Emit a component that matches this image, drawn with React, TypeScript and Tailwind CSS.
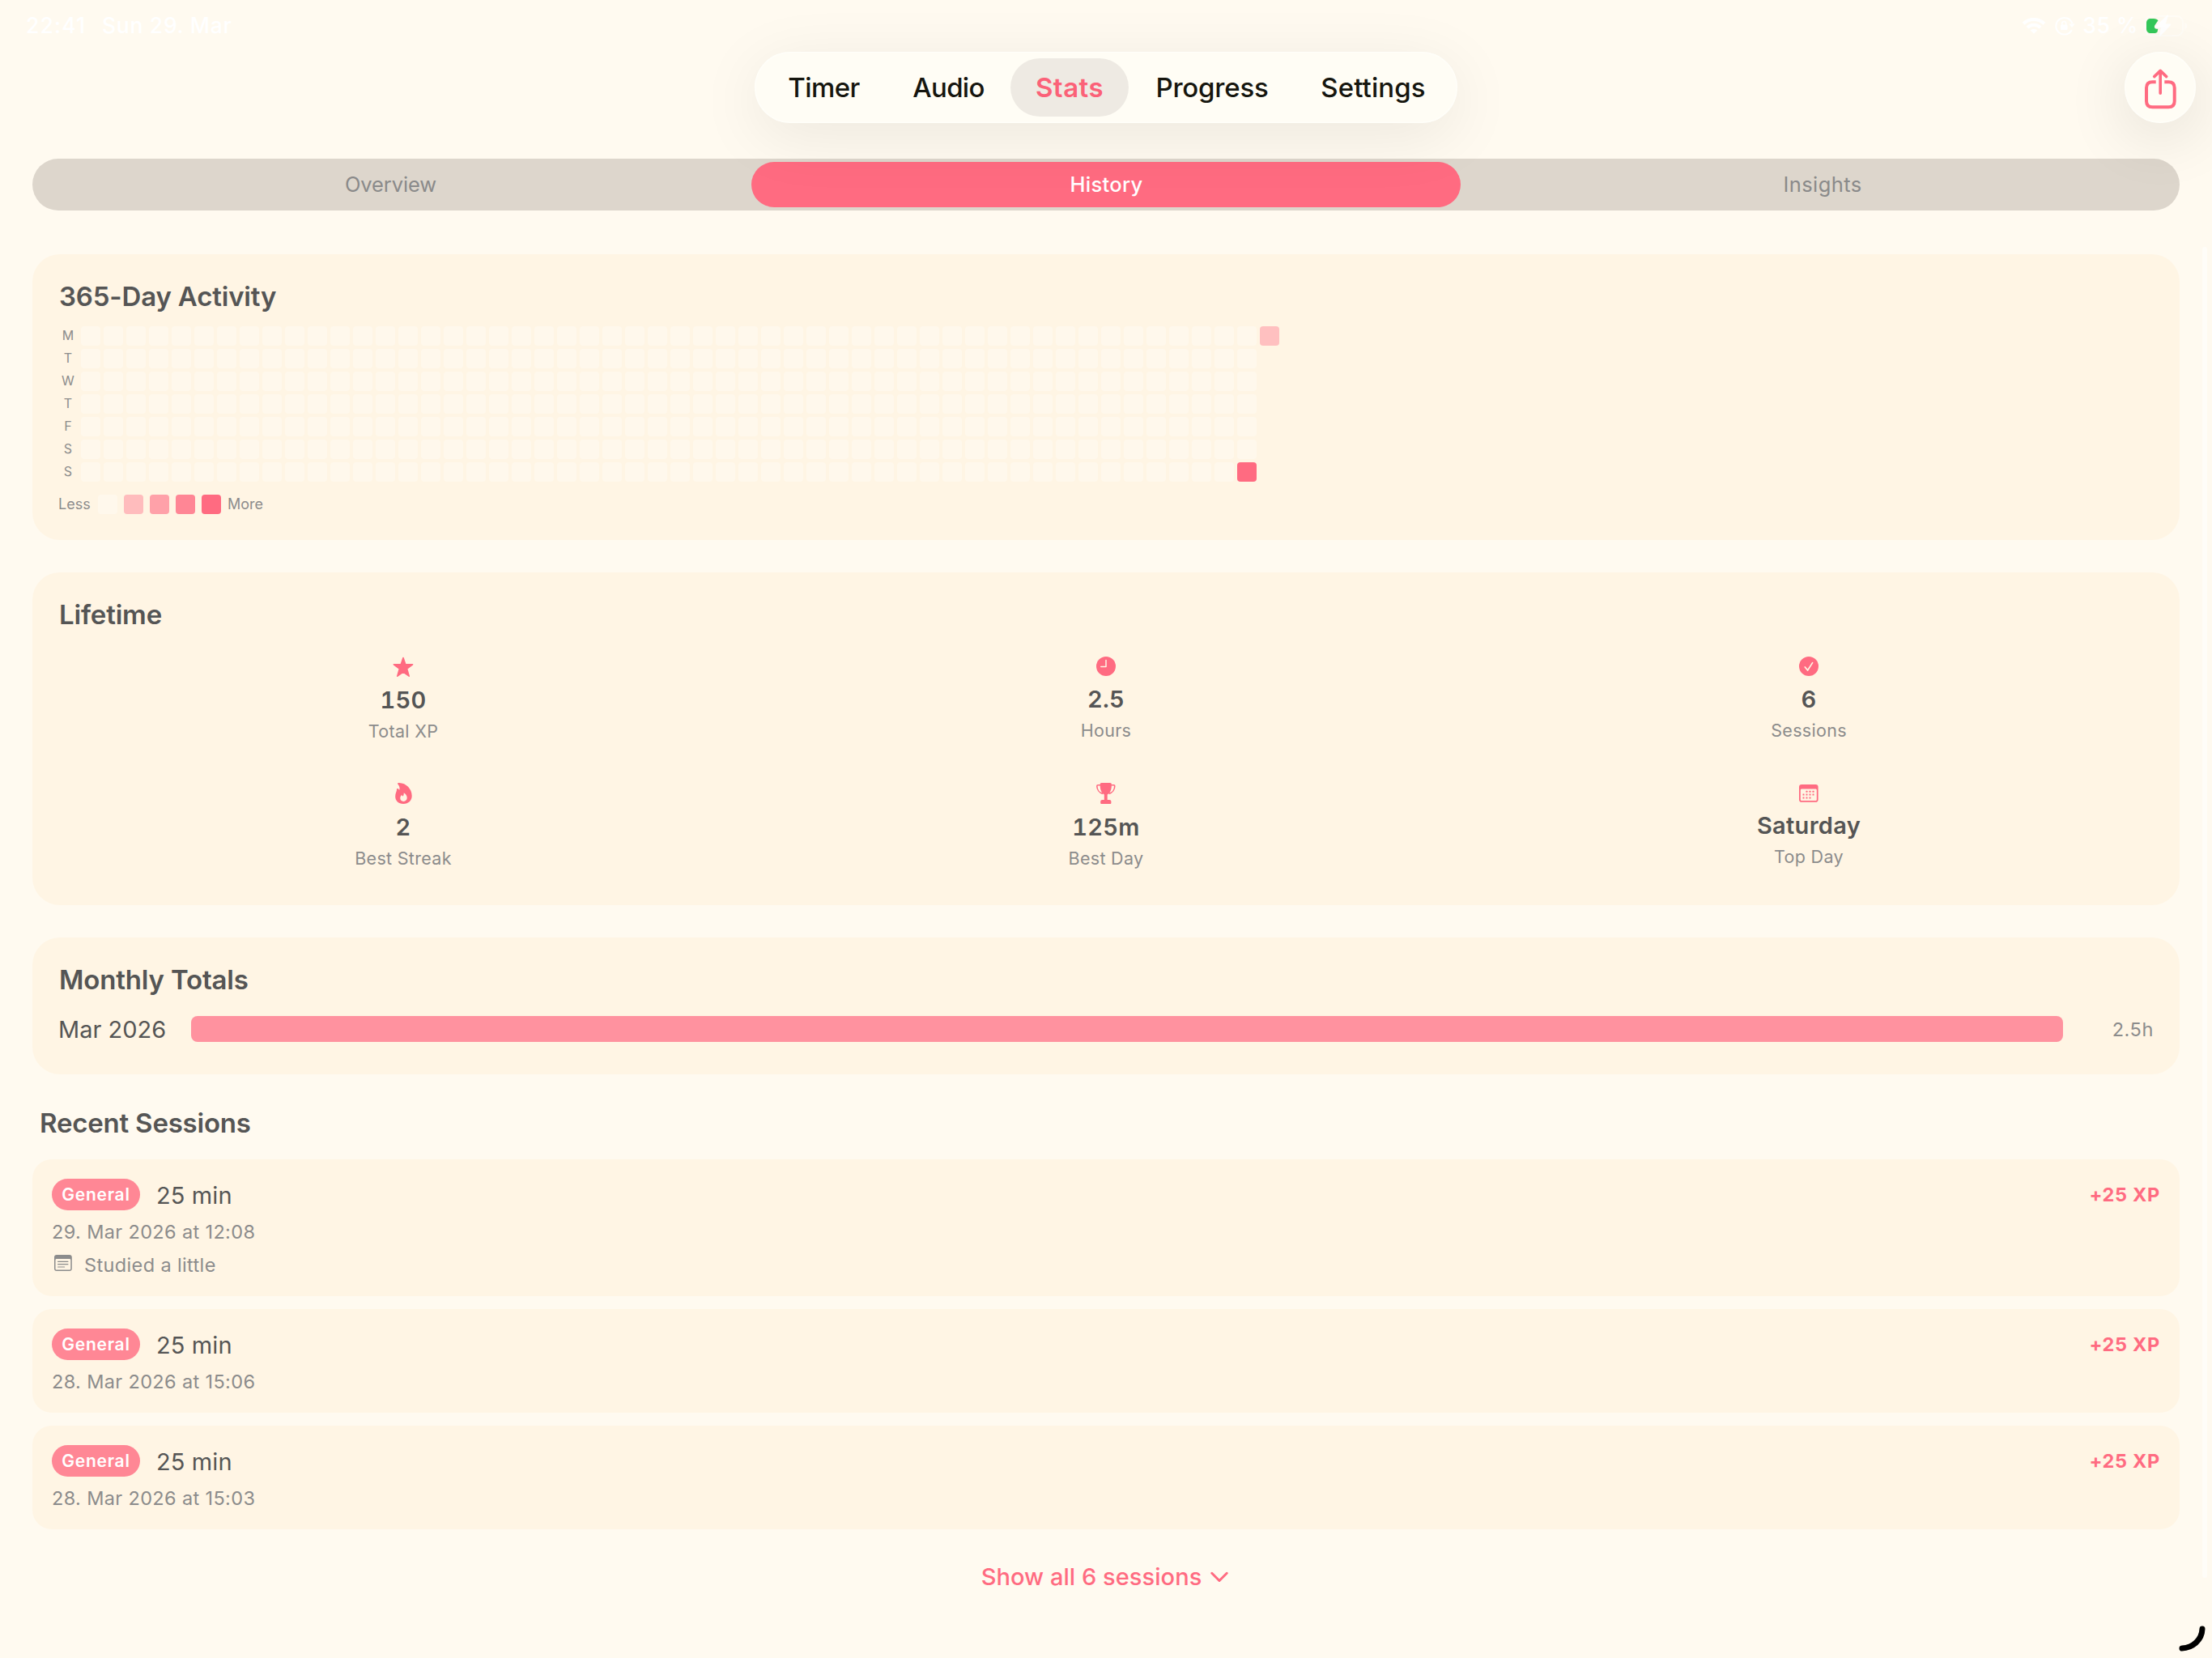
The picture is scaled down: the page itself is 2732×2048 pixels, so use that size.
import type { ReactNode } from 'react';

const tabs = [
  { label: 'Timer', className: 'w-[155px] font-medium tracking-[-0.6px] text-[#16160f]' },
  { label: 'Audio', className: 'w-[153px] font-medium tracking-[-0.7px] text-[#16160f]' },
  { label: 'Stats', className: 'w-[146px] rounded-full bg-[#eeeae3] font-semibold tracking-[0.5px] text-[#fb6178]' },
  { label: 'Progress', className: 'w-[206px] font-medium tracking-[-0.2px] text-[#16160f]' },
  { label: 'Settings', className: 'w-[192px] font-medium tracking-[0.1px] text-[#16160f]' },
];

const weekdays = ['M', 'T', 'W', 'T', 'F', 'S', 'S'];
const WEEKS = 52;

const sessions = [
  { tag: 'General', duration: '25 min', date: '29. Mar 2026 at 12:08', note: 'Studied a little', xp: '+25 XP' },
  { tag: 'General', duration: '25 min', date: '28. Mar 2026 at 15:06', xp: '+25 XP' },
  { tag: 'General', duration: '25 min', date: '28. Mar 2026 at 15:03', xp: '+25 XP' },
];

function StarIcon() {
  return (
    <svg width="26" height="26" viewBox="0 0 26 26" className="fill-[#ff6b81] stroke-[#ff6b81]">
      <path
        strokeWidth="1.6"
        strokeLinejoin="round"
        d="M13 1.6 15.8 9.7 24.6 9.8 17.6 15 20.2 24.2 13 19 5.8 24.2 8.4 15 1.4 9.8 10.2 9.7Z"
      />
    </svg>
  );
}

function ClockIcon() {
  return (
    <svg width="24" height="24" viewBox="0 0 24 24" fill="none">
      <circle cx="12" cy="12" r="12" className="fill-[#ff6b81]" />
      <path d="M12 4.5V12.4H5.8" className="stroke-[#fff5e4]" strokeWidth="1.5" strokeLinecap="round" strokeLinejoin="round" />
    </svg>
  );
}

function CheckIcon() {
  return (
    <svg width="24" height="24" viewBox="0 0 24 24" fill="none">
      <circle cx="12" cy="12" r="12" className="fill-[#ff6b81]" />
      <path d="M7.3 13 10.6 17 16.6 7.6" className="stroke-[#fff5e4]" strokeWidth="1.7" strokeLinecap="round" strokeLinejoin="round" />
    </svg>
  );
}

function FlameIcon() {
  return (
    <svg width="21" height="26" viewBox="0 0 21 26" className="fill-[#ff6b81]">
      <path
        fillRule="evenodd"
        d="M3.2.5C3.6.2 4.2.1 5 .1 13.5.3 20.7 7.5 20.7 16 20.7 22 16.5 25.9 10.2 25.9 4.2 25.9.2 22.2.2 16.7.2 13 2.2 10.8 2.1 7.6 2.1 6.9 2.7 6.7 3.3 7.1 4.1 7.5 4.8 8.2 5.2 9 6.2 6.3 5.2 3.5 3.3 1.4 3 1.1 2.9.8 3.2.5ZM10.7 12.2C10.9 13.9 10.5 15.5 9.7 16.6 8.9 16.3 8.4 15.8 8.2 14.8 7 16 6.3 17.4 6.3 19.1 6.3 21.4 7.9 22.9 10.4 22.9 13 22.9 14.7 21.1 14.7 18.6 14.7 16 13.3 13.7 10.7 12.2Z"
      />
    </svg>
  );
}

function TrophyIcon() {
  return (
    <svg width="24" height="26" viewBox="0 0 24 26" className="fill-[#ff6b81]">
      <path d="M6.5 0H17C18.2 0 18.9.7 18.9 1.9 18.9 8 17.7 11.8 13.7 14.6V21H16.2C17.5 21 18.4 21.9 18.4 23.2V24.8C18.4 25.6 18 26 17.2 26H6.5C5.7 26 5.2 25.6 5.2 24.8V23.2C5.2 21.9 6.2 21 7.4 21H9.8V14.6C5.9 11.8 4.7 8 4.7 1.9 4.7.7 5.3 0 6.5 0Z" />
      <path
        fill="none"
        className="stroke-[#ff6b81]"
        strokeWidth="1.6"
        d="M5 2.7H2C1.2 2.7.8 3.1.8 3.9.9 8.3 3.6 12.3 8 13.4M18.7 2.7H21.6C22.4 2.7 22.8 3.1 22.8 3.9 22.7 8.3 20 12.3 15.6 13.4"
      />
    </svg>
  );
}

function CalendarIcon() {
  const dots = [
    [9.5, 8.7], [13.5, 8.7], [17.5, 8.7],
    [5.5, 12.6], [9.5, 12.6], [13.5, 12.6], [17.5, 12.6],
    [5.5, 16.5], [9.5, 16.5], [13.5, 16.5],
  ];
  return (
    <svg width="24" height="22" viewBox="0 0 24 22" className="fill-[#ff6b81]">
      <path
        fillRule="evenodd"
        d="M3.2 0H20.5C22.5 0 23.6 1.1 23.6 3.1V18.7C23.6 20.7 22.5 21.8 20.5 21.8H3.2C1.1 21.8 0 20.7 0 18.7V3.1C0 1.1 1.1 0 3.2 0ZM1.8 7V18.4C1.8 19.4 2.4 20 3.4 20H20.3C21.3 20 21.8 19.4 21.8 18.4V7C21.8 6 21.3 5.5 20.3 5.5H3.4C2.4 5.5 1.8 6 1.8 7Z"
      />
      {dots.map(([x, y]) => (
        <rect key={`${x}-${y}`} x={x - 1} y={y - 1} width="2" height="2" rx="0.5" />
      ))}
    </svg>
  );
}

function NoteIcon() {
  return (
    <svg width="22" height="20" viewBox="0 0 22 20" className="fill-[#8c8c8c]">
      <path
        fillRule="evenodd"
        d="M3 0H18.8C20.7 0 21.8 1 21.8 2.9V17.1C21.8 19 20.7 20 18.8 20H3C1.1 20 0 19 0 17.1V2.9C0 1 1.1 0 3 0ZM1.5 6.5V16.9C1.5 17.9 2.1 18.5 3.1 18.5H18.7C19.7 18.5 20.3 17.9 20.3 16.9V6.5C20.3 5.5 19.7 5 18.7 5H3.1C2.1 5 1.5 5.5 1.5 6.5Z"
      />
      <path fill="none" className="stroke-[#8c8c8c]" strokeWidth="1.2" strokeLinecap="round" d="M4.6 8.4H16.9M4.6 11.7H16.9M4.6 15H12.6" />
    </svg>
  );
}

function StatusIcons() {
  return (
    <div className="flex items-center text-white">
      <svg width="30" height="22" viewBox="0 0 30 22" fill="none" stroke="currentColor" strokeWidth="4">
        <path d="M2.1 8.2A18.5 18.5 0 0 1 27.9 8.2" />
        <path d="M6.9 13A11.7 11.7 0 0 1 23.1 13" />
        <path d="M15 20.8 10.7 16.5A6.2 6.2 0 0 1 19.3 16.5Z" fill="currentColor" stroke="none" />
      </svg>
      <svg width="26" height="24" viewBox="0 0 26 24" fill="none" stroke="currentColor" strokeWidth="2" className="ml-2.5">
        <path d="M21.8 17A10.3 10.3 0 1 1 22.4 9" />
        <path d="M18.5 9.5H25.5L22 14Z" fill="currentColor" stroke="none" />
        <rect x="8" y="10.5" width="8.5" height="6.5" rx="1.3" fill="currentColor" stroke="none" />
        <path d="M9.8 11V9A2.45 2.45 0 0 1 14.7 9V11" strokeWidth="1.5" />
      </svg>
      <span className="ml-[9px] tracking-[0.6px]">35 %</span>
      <svg width="56" height="28" viewBox="0 0 56 28" className="ml-1.5">
        <rect x="2" y="2" width="47" height="24" rx="7.5" fill="none" stroke="currentColor" strokeOpacity="0.4" strokeWidth="2" />
        <path d="M51.5 10V18C53.3 17.4 54.4 16 54.4 14 54.4 12 53.3 10.6 51.5 10Z" fill="currentColor" fillOpacity="0.45" />
        <path d="M9.500 5H13C15.500 5 17.800 6 18.500 7.300L14.300 13.200C13.300 15.200 14 17.500 16.500 17.800H18.300L17.500 21.500C16.500 22.600 15 23 13 23H9.500C6 23 4 21 4 17.500V10.500C4 7 6 5 9.500 5Z" fill="#34c759" />
        <path d="M29.5.8 15.6 14.4C14.8 15.3 15.2 16.2 16.4 16.2H22L19.6 26C19.4 27 20.2 27.5 21 26.8L33.8 13.3C34.6 12.4 34.3 11.6 33.2 11.6H27.8L30.8 1.8C31.1.8 30.3.1 29.5.8Z" fill="currentColor" />
      </svg>
    </div>
  );
}

function Card({ title, children }: { title: string; children: ReactNode }) {
  return (
    <section className="rounded-[34px] bg-[#fff5e4] p-8">
      <h2 className="mb-4 pl-px text-[33px] leading-[41px] font-semibold tracking-[-0.17px]">{title}</h2>
      {children}
    </section>
  );
}

function Stat({ icon, value, label, iconBox }: { icon: ReactNode; value: string; label: string; iconBox: string }) {
  return (
    <div className="flex flex-col items-center">
      <div className={`flex items-center justify-center ${iconBox}`}>{icon}</div>
      <div className="text-[29px] leading-[29px] font-semibold tracking-[0.3px] tabular-nums">{value}</div>
      <div className="mt-2.5 text-[21.5px] leading-7 tracking-[0.3px] text-[#8c8c8c]">{label}</div>
    </div>
  );
}

function ActivityGrid() {
  return (
    <>
      <div className="flex gap-1">
        <div className="-mt-px flex w-6 flex-col gap-1 text-center text-base leading-6 text-[#8c8c8c]">
          {weekdays.map((day, i) => (
            <span key={i}>{day}</span>
          ))}
        </div>
        {Array.from({ length: WEEKS }, (_, week) => (
          <div key={week} className="flex flex-col gap-1">
            {weekdays.map((_, day) => (
              <div
                key={day}
                className={`size-6 rounded-[4px] ${week === WEEKS - 1 && day === 6 ? 'bg-[#ff6b81]' : 'bg-[#fff8ec]'}`}
              />
            ))}
          </div>
        ))}
        <div className="size-6 rounded-[4px] bg-[#ffc0c0]" />
      </div>
      <div className="mt-4 flex h-6 items-center gap-2 text-[18px] text-[#8c8c8c]">
        <span className="mb-px w-[41px]">Less</span>
        <div className="size-6 rounded-[4px] bg-[#fff8ec]" />
        <div className="size-6 rounded-[4px] bg-[#ffbcbd]" />
        <div className="size-6 rounded-[4px] bg-[#ffa1a9]" />
        <div className="size-6 rounded-[4px] bg-[#ff8695]" />
        <div className="size-6 rounded-[4px] bg-[#ff6b81]" />
        <span className="mb-px">More</span>
      </div>
    </>
  );
}

export default function App() {
  return (
    <div className="relative h-[2048px] w-[2732px] overflow-hidden bg-[#fffaf0] font-[Inter,'Liberation_Sans',sans-serif] text-[#555555]">
      {/* Status bar */}
      <div className="flex h-16 items-center justify-between pr-[29px] pl-8 text-[26.5px] font-medium text-white">
        <div className="flex">
          <span className="w-[94px] tracking-[1.15px]">22:41</span>
          <span className="tracking-[0.7px]">Sun 29. Mar</span>
        </div>
        <StatusIcons />
      </div>

      {/* Tab bar */}
      <header className="relative z-10 flex h-[88px] justify-end pr-5">
        <nav className="flex w-[868px] rounded-full bg-[#fffdf5] p-2 text-[33px] shadow-[0_16px_80px_rgba(0,0,0,0.08),inset_0_0_2px_1px_#fffffb]">
          {tabs.map((tab) => (
            <button key={tab.label} className={`flex h-[72px] items-center justify-center pt-0.5 ${tab.className}`}>
              {tab.label}
            </button>
          ))}
        </nav>
        <button className="ml-[824px] size-[88px] rounded-full bg-[#fffdf5] shadow-[0_16px_80px_rgba(0,0,0,0.12),inset_0_0_2px_1px_#fffffb]">
          <svg width="88" height="88" viewBox="0 0 88 88" fill="none" className="stroke-[#ff6b81]">
            <path d="M38.7 37.3H34.5C29.5 37.3 27 39.8 27 44.6V61C27 65.9 29.5 68.3 34.5 68.3H54.2C59.2 68.3 61.7 65.9 61.7 61V44.6C61.7 39.8 59.2 37.3 54.2 37.3H49.3" strokeWidth="4" />
            <path d="M44.2 51.2V24M36.7 30.6 44.2 23.4 51.7 30.6" strokeWidth="3.6" strokeLinecap="round" strokeLinejoin="round" />
          </svg>
        </button>
      </header>

      <main className="px-10 pt-11">
        {/* Segmented control */}
        <div className="grid h-16 grid-cols-3 rounded-full bg-[#ddd6cc] text-[25.5px] text-[#8a8a8a]">
          <button className="pl-px tracking-[-0.1px]">Overview</button>
          <button className="m-1 rounded-full bg-[#ff6b81] pl-px font-medium tracking-[0.3px] text-white">History</button>
          <button className="pl-0.5 tracking-[0.4px]">Insights</button>
        </div>

        <div className="mt-[54px] flex flex-col gap-10">
          <Card title="365-Day Activity">
            <ActivityGrid />
          </Card>

          <Card title="Lifetime">
            <div className="grid auto-rows-[133px] grid-cols-3 gap-x-4 gap-y-6">
              <Stat icon={<StarIcon />} value="150" label="Total XP" iconBox="h-[54px] pt-px" />
              <Stat icon={<ClockIcon />} value="2.5" label="Hours" iconBox="h-[53px]" />
              <Stat icon={<CheckIcon />} value="6" label="Sessions" iconBox="h-[53px]" />
              <Stat icon={<FlameIcon />} value="2" label="Best Streak" iconBox="h-[54px]" />
              <Stat icon={<TrophyIcon />} value="125m" label="Best Day" iconBox="h-[54px]" />
              <Stat icon={<CalendarIcon />} value="Saturday" label="Top Day" iconBox="h-[52px] pt-0.5" />
            </div>
          </Card>

          <Card title="Monthly Totals">
            <div className="flex h-12 items-center">
              <span className="w-[164px] pt-0.5 text-[29px]">Mar 2026</span>
              <div className="h-8 flex-1 rounded-lg bg-[#ff929f]" />
              <span className="w-28 pt-px text-right text-[23.5px] tracking-[0.6px] text-[#8c8c8c]">2.5h</span>
            </div>
          </Card>
        </div>

        {/* Recent sessions */}
        <h2 className="mt-10 mb-6 pl-[9px] text-[33px] leading-[41px] font-semibold tracking-[-0.2px]">Recent Sessions</h2>
        <div className="flex flex-col gap-4">
          {sessions.map((session) => (
            <div key={session.date} className="rounded-[24px] bg-[#fff5e4] p-6">
              <div className="flex h-[39px] items-center">
                <span className="flex h-[39px] w-[109px] items-center justify-center rounded-full bg-[#ff8795] text-[21px] font-semibold tracking-[0.75px] text-white">
                  {session.tag}
                </span>
                <span className="ml-5 pt-0.5 text-[29px] tracking-[0.1px]">{session.duration}</span>
                <span className="ml-auto text-[23.5px] font-bold tracking-[0.7px] text-[#ff6b81]">{session.xp}</span>
              </div>
              <p className="mt-3 text-[23.5px] leading-[29px] tracking-[0.36px] text-[#8c8c8c]">{session.date}</p>
              {session.note && (
                <div className="mt-3 flex h-[29px] items-center text-[23.5px] leading-[29px] tracking-[0.37px] text-[#8c8c8c]">
                  <div className="mb-1.5 w-10 pl-[3px]">
                    <NoteIcon />
                  </div>
                  {session.note}
                </div>
              )}
            </div>
          ))}
        </div>

        <button className="mx-auto mt-[41px] flex h-9 items-center gap-[11px] pr-[3px] text-[29px] font-medium tracking-[0.06px] text-[#ff6b81]">
          Show all 6 sessions
          <svg width="22" height="14" viewBox="0 0 22 14" fill="none" stroke="currentColor" strokeWidth="3" strokeLinecap="round" strokeLinejoin="round">
            <path d="M1.8 2.3 11 11.5 20.2 2.3" />
          </svg>
        </button>
      </main>

      {/* Scroll indicator */}
      <div className="absolute top-[305px] right-1.5 h-[1644px] w-1.5 rounded-full bg-[#fffdf8]" />

      {/* Corner handle */}
      <svg width="40" height="40" viewBox="0 0 40 40" fill="none" className="absolute right-1 bottom-1">
        <path d="M7 32C20.5 31.5 31.5 21.5 32 8" stroke="black" strokeWidth="7" strokeLinecap="round" />
      </svg>
    </div>
  );
}
